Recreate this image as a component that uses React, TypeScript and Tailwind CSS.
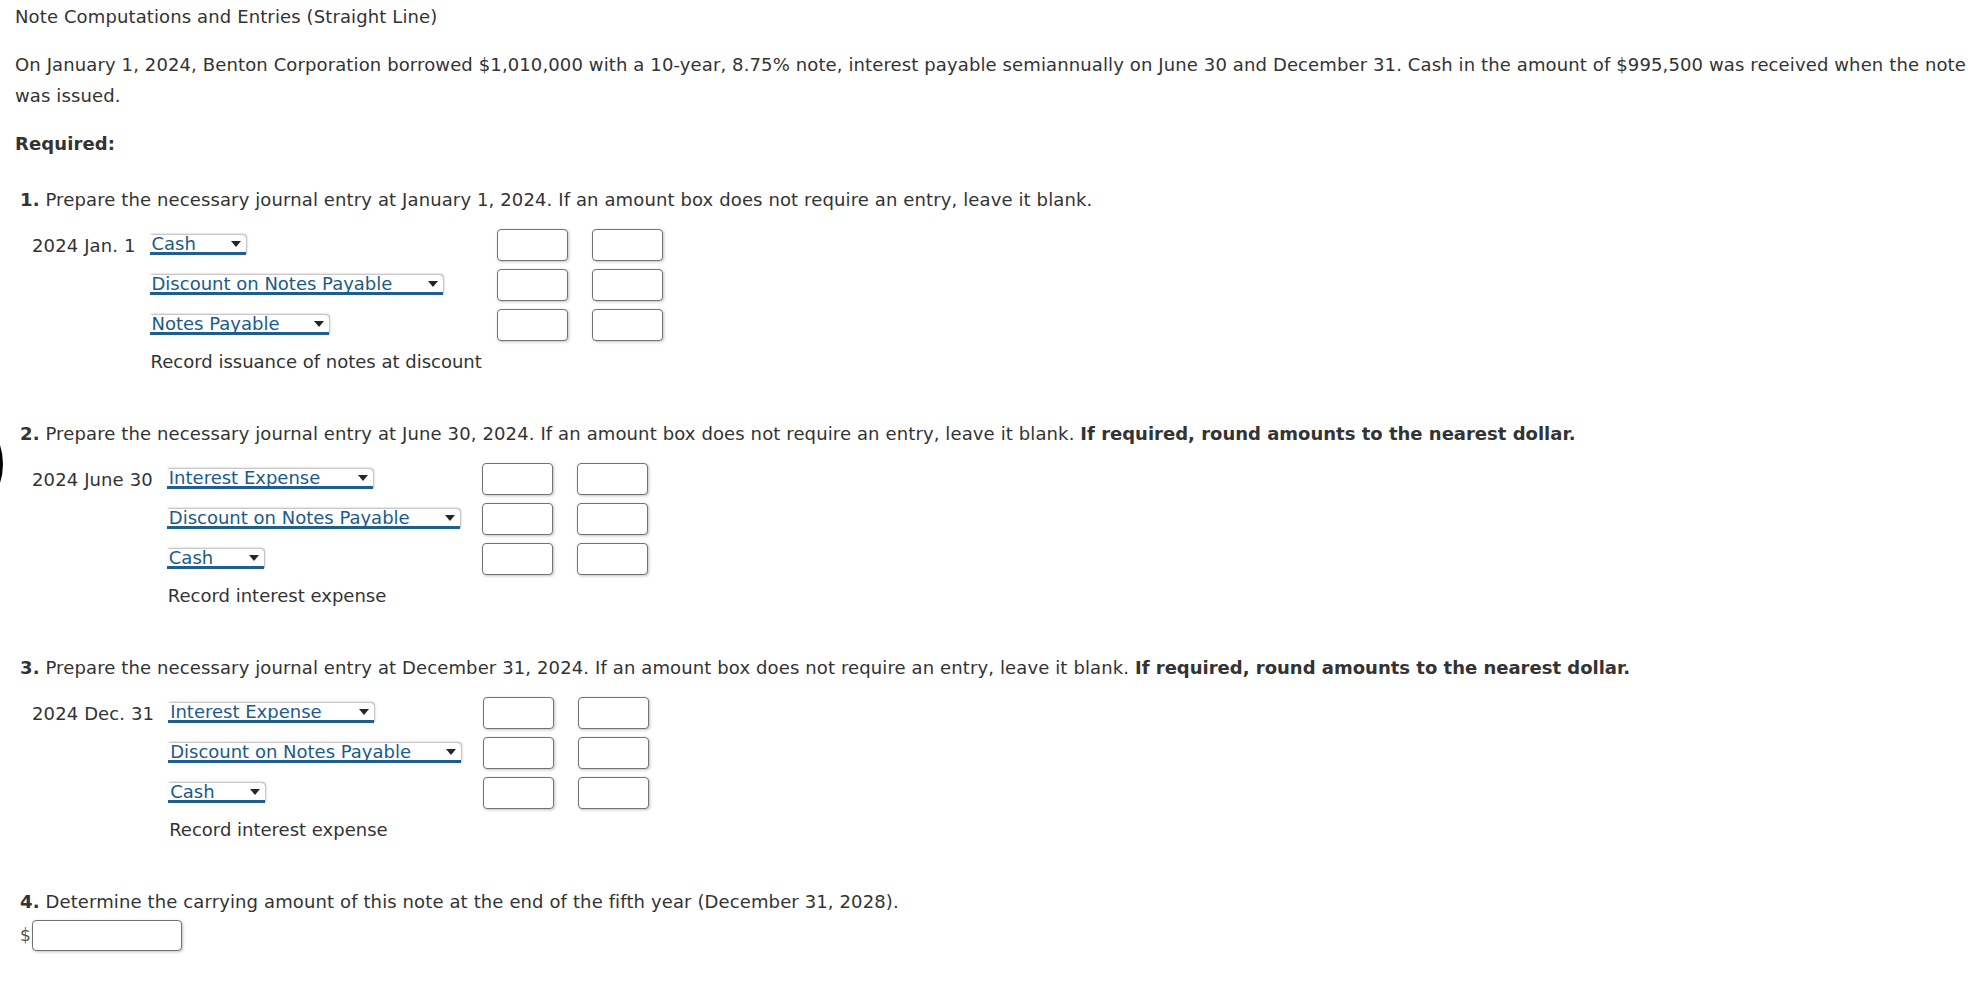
import React from 'react';

interface AccountSelectProps {
  label: string;
  width: string;
}

function AccountSelect({ label, width }: AccountSelectProps) {
  return (
    <div
      className={`relative mr-[7px] flex h-[20px] items-start rounded-tr-[4px] border-b-[3px] border-[#1f5f8e] bg-white pl-[2px] leading-[17px] tracking-normal text-[#1a5b8c] shadow-[1px_-1px_2px_rgba(0,0,0,0.3)] ${width}`}
    >
      <span className="whitespace-nowrap">{label}</span>
      <svg className="absolute right-[5px] top-[6px]" width="10" height="6" viewBox="0 0 10 6">
        <path d="M0 0 H10 L5 6 Z" fill="#262626" />
      </svg>
    </div>
  );
}

function AmountBox() {
  return (
    <input
      type="text"
      className="block h-[32px] w-[71px] rounded-[4px] border border-[#727272] bg-white shadow-[1px_1px_3px_rgba(0,0,0,0.25)] outline-none"
    />
  );
}

interface Line {
  label: string;
  width: string;
}

interface EntrySectionProps {
  number: string;
  text: string;
  bold?: string;
  date: string;
  lines: Line[];
  note: string;
}

function EntrySection({ number, text, bold, date, lines, note }: EntrySectionProps) {
  return (
    <div className="ml-[5px]">
      <p className="whitespace-nowrap">
        <b>{number}</b> {text}
        {bold && (
          <>
            {' '}
            <b className="tracking-normal">{bold}</b>
          </>
        )}
      </p>
      <div className="ml-[12px] mt-[14px] grid w-max grid-cols-[auto_auto_auto_auto] items-center justify-start justify-items-start gap-y-[8px]">
        {lines.map((line, i) => (
          <React.Fragment key={line.label}>
            <div className="whitespace-nowrap pr-[14px]">{i === 0 ? date : ''}</div>
            <div className="pr-[15px]">
              <AccountSelect label={line.label} width={line.width} />
            </div>
            <div className="pr-[24px]">
              <AmountBox />
            </div>
            <div>
              <AmountBox />
            </div>
          </React.Fragment>
        ))}
        <div />
        <div className="whitespace-nowrap pl-[1px] pr-[15px] leading-[25px] tracking-normal">{note}</div>
        <div />
        <div />
      </div>
    </div>
  );
}

export default function App() {
  return (
    <div className="relative min-h-screen overflow-hidden bg-white pl-[15px] pr-[6px] pt-[1px] font-['DejaVu_Sans',Verdana,sans-serif] text-[18px] leading-[31px] tracking-[0.12px] text-[#333]">
      <div className="absolute left-[-121px] top-[402px] h-[124px] w-[124px] rounded-full bg-black" />

      <p>Note Computations and Entries (Straight Line)</p>

      <p className="mt-[17px]">
        On January 1, 2024, Benton Corporation borrowed $1,010,000 with a 10-year, 8.75% note, interest payable
        semiannually on June 30 and December 31. Cash in the amount of $995,500 was received when the note was issued.
      </p>

      <p className="mt-[17px] font-bold">Required:</p>

      <div className="mt-[25px] flex flex-col gap-[44px]">
        <EntrySection
          number="1."
          text="Prepare the necessary journal entry at January 1, 2024. If an amount box does not require an entry, leave it blank."
          date="2024 Jan. 1"
          lines={[
            { label: 'Cash', width: 'w-[96px]' },
            { label: 'Discount on Notes Payable', width: 'w-[293px]' },
            { label: 'Notes Payable', width: 'w-[179px]' },
          ]}
          note="Record issuance of notes at discount"
        />
        <EntrySection
          number="2."
          text="Prepare the necessary journal entry at June 30, 2024. If an amount box does not require an entry, leave it blank."
          bold="If required, round amounts to the nearest dollar."
          date="2024 June 30"
          lines={[
            { label: 'Interest Expense', width: 'w-[206px]' },
            { label: 'Discount on Notes Payable', width: 'w-[293px]' },
            { label: 'Cash', width: 'w-[97px]' },
          ]}
          note="Record interest expense"
        />
        <EntrySection
          number="3."
          text="Prepare the necessary journal entry at December 31, 2024. If an amount box does not require an entry, leave it blank."
          bold="If required, round amounts to the nearest dollar."
          date="2024 Dec. 31"
          lines={[
            { label: 'Interest Expense', width: 'w-[206px]' },
            { label: 'Discount on Notes Payable', width: 'w-[293px]' },
            { label: 'Cash', width: 'w-[97px]' },
          ]}
          note="Record interest expense"
        />
        <div className="ml-[5px]">
          <p>
            <b>4.</b> Determine the carrying amount of this note at the end of the fifth year (December 31, 2028).
          </p>
          <div className="mt-[3px] flex items-center">
            <span className="text-[17px] leading-[31px] text-[#555]">$</span>
            <input
              type="text"
              className="ml-[1px] block h-[31px] w-[150px] rounded-[4px] border border-[#727272] bg-white shadow-[1px_1px_3px_rgba(0,0,0,0.25)] outline-none"
            />
          </div>
        </div>
      </div>
    </div>
  );
}
